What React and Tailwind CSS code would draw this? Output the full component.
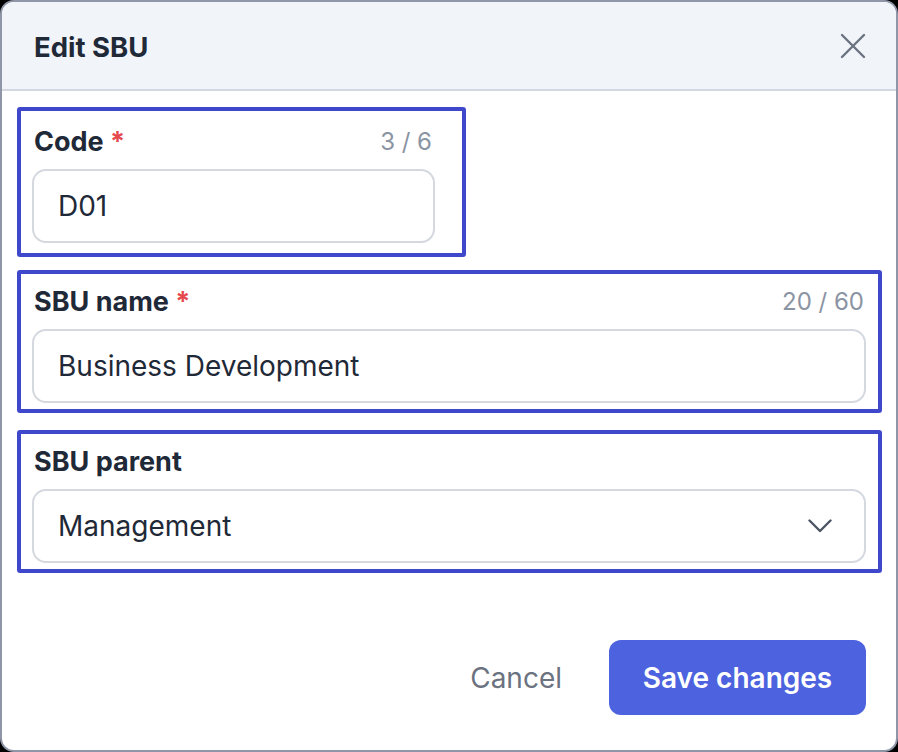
export default function App() {
  const font = { fontFamily: 'Inter, "Noto Sans", sans-serif' };
  return (
    <div className="w-[898px] h-[752px] bg-black" style={font}>
      <div className="w-full h-full bg-white rounded-[14px] border-2 border-[#8e96a8] overflow-hidden flex flex-col">
        <div className="h-[89px] shrink-0 bg-[#f1f4f9] border-b-2 border-[#d3d8e0] flex items-center justify-between pl-[32px] pr-[30px]">
          <h1 className="text-[27.5px] leading-[32px] font-bold text-[#1f2937] pt-[2px]">Edit SBU</h1>
          <svg width="26" height="26" viewBox="0 0 26 26" fill="none" stroke="#6b7280" strokeWidth="2.4" strokeLinecap="round">
            <path d="M2 2L24 24M24 2L2 24" />
          </svg>
        </div>

        <div className="flex flex-col pl-[15px] pr-[14px]">
          <div className="mt-[16px] w-[449px] border-4 border-[#3f48cb] rounded-[3px] pt-[15px] pb-[10px] pl-[11px] pr-[27px]">
            <div className="h-[32px] flex items-center justify-between pl-[2px] pr-[3px]">
              <span className="text-[27px] font-bold text-[#1f2937]">Code <span className="text-[#e5484d]">*</span></span>
              <span className="text-[24px] text-[#8b94a3]">3 / 6</span>
            </div>
            <div className="mt-[11px] h-[74px] rounded-[14px] border-2 border-[#d4d8df] flex items-center pl-[24px] text-[28px] text-[#1f2937]">D01</div>
          </div>

          <div className="mt-[13px] border-4 border-[#3f48cb] rounded-[3px] pt-[12px] pb-[6px] pl-[11px] pr-[12px]">
            <div className="h-[32px] flex items-center justify-between pl-[2px] pr-[2px]">
              <span className="text-[27px] font-bold text-[#1f2937]">SBU name <span className="text-[#e5484d]">*</span></span>
              <span className="text-[24px] text-[#8b94a3]">20 / 60</span>
            </div>
            <div className="mt-[11px] h-[74px] rounded-[14px] border-2 border-[#d4d8df] flex items-center pl-[24px] text-[28px] text-[#1f2937]">Business Development</div>
          </div>

          <div className="mt-[17px] border-4 border-[#3f48cb] rounded-[3px] pt-[12px] pb-[6px] pl-[11px] pr-[12px]">
            <div className="h-[32px] flex items-center pl-[2px]">
              <span className="text-[27px] font-bold text-[#1f2937]">SBU parent</span>
            </div>
            <div className="mt-[11px] h-[74px] rounded-[14px] border-2 border-[#d4d8df] flex items-center justify-between pl-[24px] pr-[32px] text-[28px] text-[#1f2937]">
              <span>Management</span>
              <svg width="24" height="14" viewBox="0 0 24 14" fill="none" stroke="#4b5563" strokeWidth="2.4" strokeLinecap="round" strokeLinejoin="round">
                <path d="M1.5 1.5L12 12L22.5 1.5" />
              </svg>
            </div>
          </div>
        </div>

        <div className="mt-[67px] flex items-center justify-end pr-[30px] gap-[47px]">
          <span className="text-[28px] text-[#6b7280]">Cancel</span>
          <button className="w-[257px] h-[75px] rounded-[12px] bg-[#4c62de] text-white text-[28px] font-semibold">Save changes</button>
        </div>
      </div>
    </div>
  );
}
